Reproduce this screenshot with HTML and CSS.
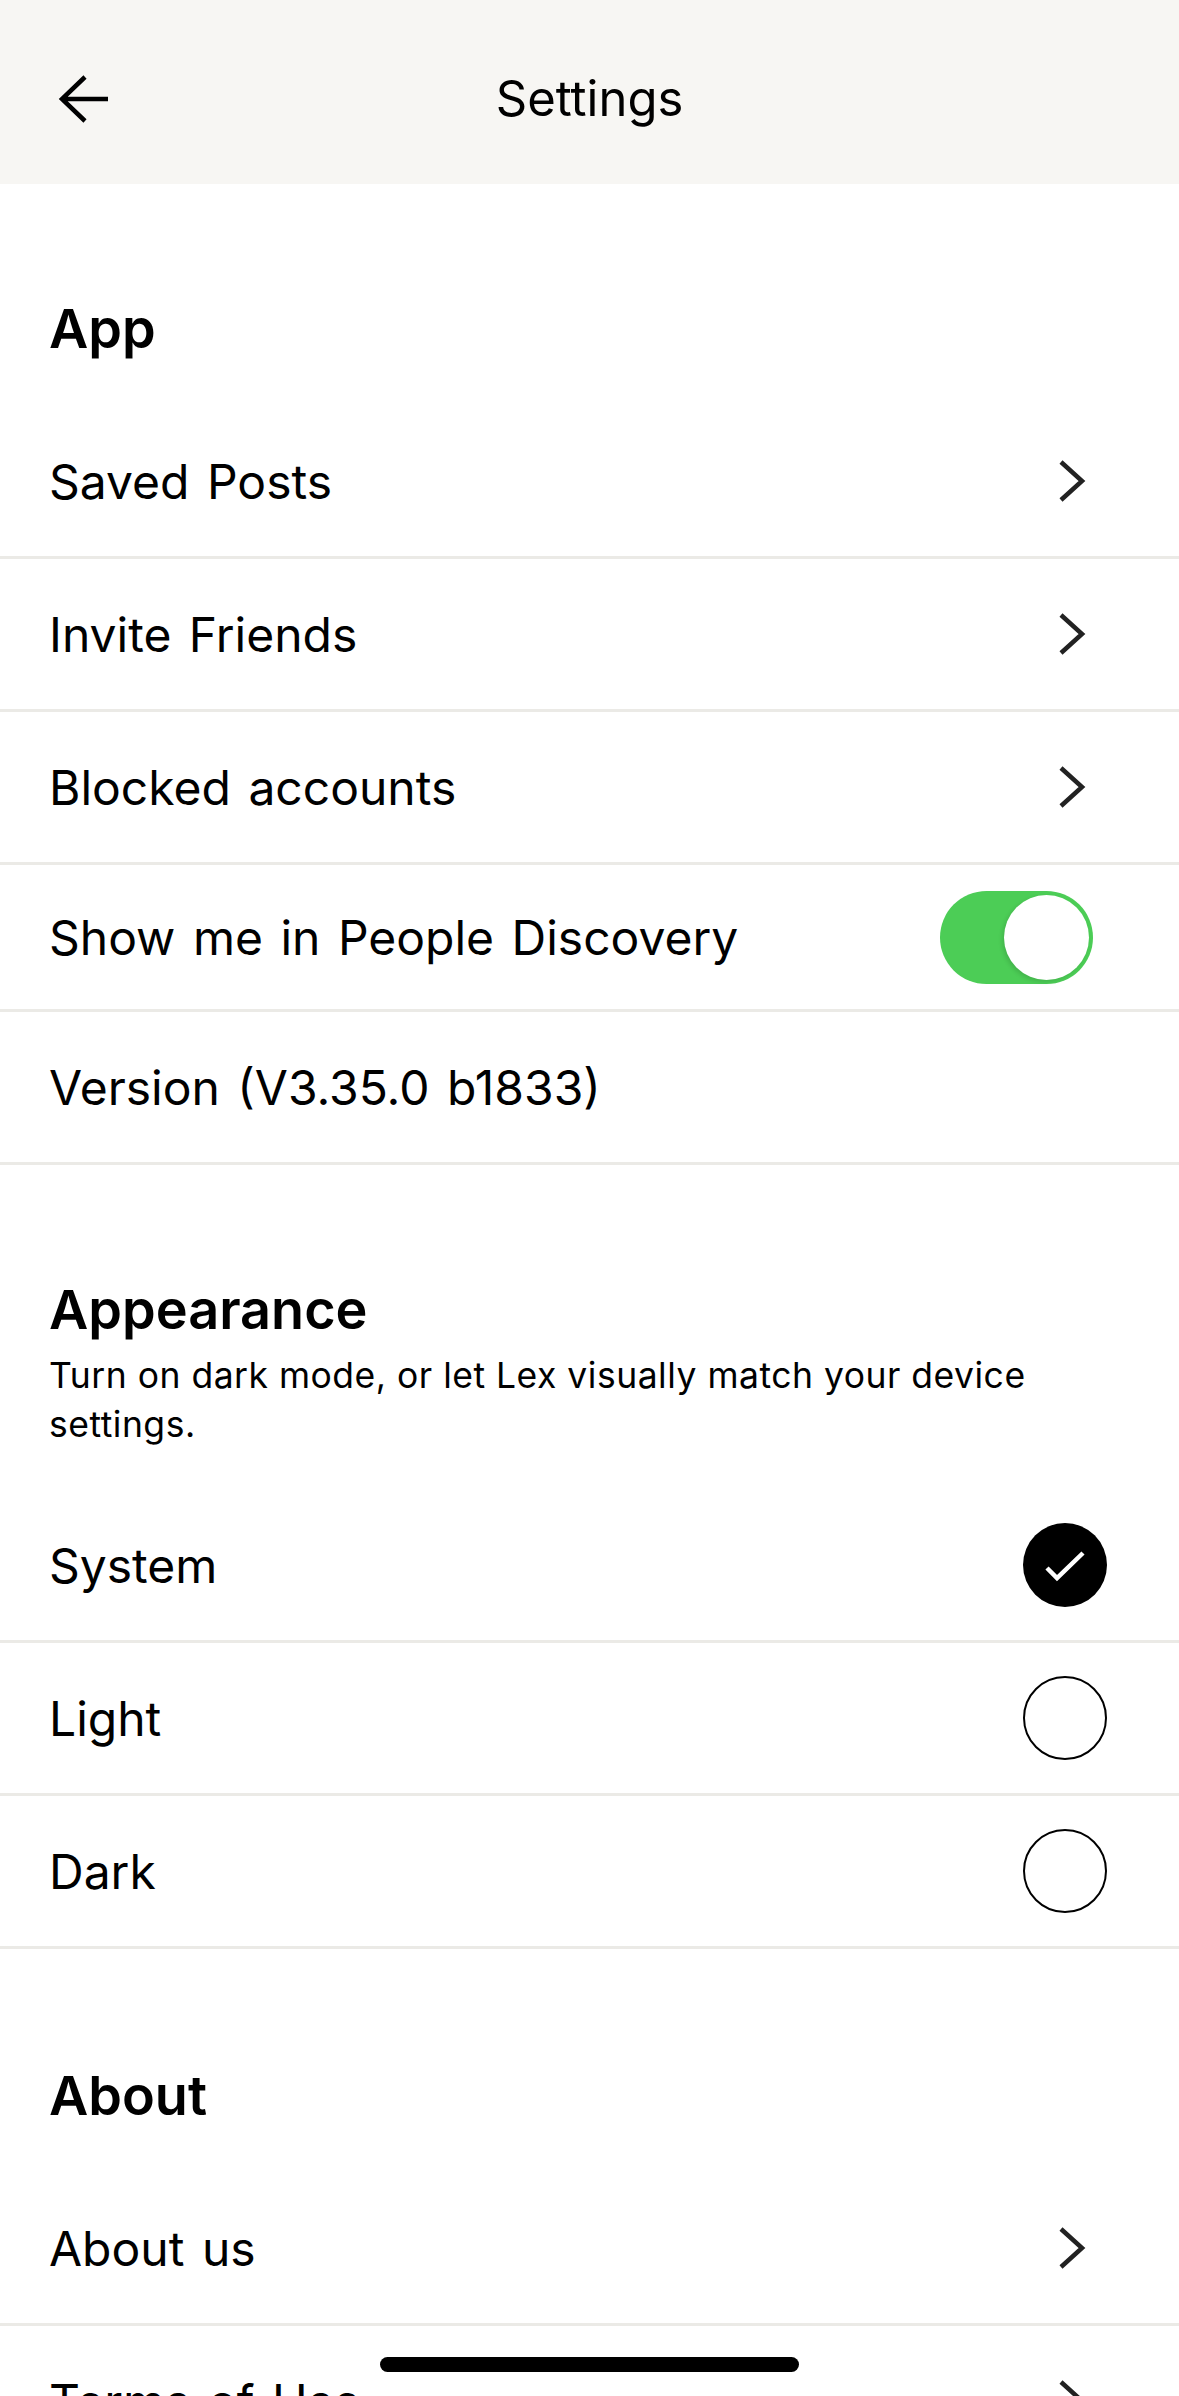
FILE: index.html
```html
<!DOCTYPE html>
<html>
    <head>
        <meta charset="utf-8">
        <title>Settings</title>
        <link rel="stylesheet" href="styles.css">
    </head>
    <body>
        <div class="topbar">
            <button class="back" aria-label="Back">
                <svg width="56" height="54" viewBox="0 0 56 54">
                    <path d="M52 27 H6 M29 5 L6 27 L29 49" fill="none" stroke="#000" stroke-width="4.5"/>
                </svg>
            </button>
            <div class="title">Settings</div>
            <div></div>
        </div>

        <div class="section-head">
            <h2>App</h2>
        </div>
        <div class="row">
            <span>Saved Posts</span>
            <svg class="chev" width="40" height="48" viewBox="0 0 40 48"><path d="M8 5 L29 24 L8 43" fill="none" stroke="#222" stroke-width="4.5"/></svg>
        </div>
        <div class="row">
            <span>Invite Friends</span>
            <svg class="chev" width="40" height="48" viewBox="0 0 40 48"><path d="M8 5 L29 24 L8 43" fill="none" stroke="#222" stroke-width="4.5"/></svg>
        </div>
        <div class="row">
            <span>Blocked accounts</span>
            <svg class="chev" width="40" height="48" viewBox="0 0 40 48"><path d="M8 5 L29 24 L8 43" fill="none" stroke="#222" stroke-width="4.5"/></svg>
        </div>
        <div class="row row-short">
            <span>Show me in People Discovery</span>
            <div class="toggle on"><div class="knob"></div></div>
        </div>
        <div class="row">
            <span>Version (V3.35.0 b1833)</span>
        </div>

        <div class="section-head">
            <h2>Appearance</h2>
            <p class="desc">Turn on dark mode, or let Lex visually match your device settings.</p>
        </div>
        <div class="row">
            <span>System</span>
            <div class="radio checked">
                <svg width="84" height="84" viewBox="0 0 84 84"><path d="M24 45 L34 55 L60 30" fill="none" stroke="#fff" stroke-width="4.5"/></svg>
            </div>
        </div>
        <div class="row">
            <span>Light</span>
            <div class="radio"></div>
        </div>
        <div class="row">
            <span>Dark</span>
            <div class="radio"></div>
        </div>

        <div class="section-head section-about">
            <h2>About</h2>
        </div>
        <div class="row">
            <span>About us</span>
            <svg class="chev" width="40" height="48" viewBox="0 0 40 48"><path d="M8 5 L29 24 L8 43" fill="none" stroke="#222" stroke-width="4.5"/></svg>
        </div>
        <div class="row">
            <span>Terms of Use</span>
            <svg class="chev" width="40" height="48" viewBox="0 0 40 48"><path d="M8 5 L29 24 L8 43" fill="none" stroke="#222" stroke-width="4.5"/></svg>
        </div>
        <div class="row">
            <span>Privacy Policy</span>
            <svg class="chev" width="40" height="48" viewBox="0 0 40 48"><path d="M8 5 L29 24 L8 43" fill="none" stroke="#222" stroke-width="4.5"/></svg>
        </div>

        <div class="home-bar"></div>
    </body>
</html>
```

FILE: styles.css
```css
body {
    margin: 0;
    background: #ffffff;
    color: #000;
    font-family: Inter, "Liberation Sans", sans-serif;
}

.topbar {
    display: grid;
    grid-template-columns: 1fr auto 1fr;
    align-items: center;
    height: 184px;
    padding: 14px 56px 0 56px;
    box-sizing: border-box;
    background-color: #f7f6f3;
}

.back {
    justify-self: start;
    background: none;
    border: none;
    padding: 0;
    display: flex;
}

.title {
    font-size: 49px;
    line-height: 60px;
}

.section-head {
    padding: 114px 49px 46px;
}

.section-head h2 {
    margin: 0;
    font-size: 54px;
    font-weight: 600;
    line-height: 62px;
}

.section-head .desc {
    margin: 10px 0 -5px;
    font-size: 35.5px;
    letter-spacing: 0.5px;
    line-height: 49px;
}

.section-about {
    padding-top: 116px;
}

.row {
    display: flex;
    align-items: center;
    justify-content: space-between;
    height: 150px;
    padding: 0 72px 0 49px;
    border-bottom: 3px solid #ebeae6;
    font-size: 48px;
    word-spacing: 4px;
}

.row-short {
    height: 144px;
}

.chev {
    margin-right: 14px;
}

.toggle {
    display: flex;
    justify-content: flex-end;
    align-items: center;
    width: 153px;
    height: 93px;
    padding: 4px;
    box-sizing: border-box;
    border-radius: 47px;
    margin-right: 14px;
    background-color: #4ccd56;
}

.knob {
    width: 85px;
    height: 85px;
    border-radius: 50%;
    background: #fff;
    box-shadow: -2px 2px 4px rgba(0, 0, 0, 0.12);
}

.radio {
    width: 84px;
    height: 84px;
    border-radius: 50%;
    border: 2.5px solid #000;
    box-sizing: border-box;
    display: flex;
    align-items: center;
    justify-content: center;
}

.radio.checked {
    background: #000;
    border: none;
}

.home-bar {
    position: fixed;
    left: 50%;
    bottom: 24px;
    width: 419px;
    height: 15px;
    margin-left: -210px;
    border-radius: 8px;
    background: #000;
}
```
